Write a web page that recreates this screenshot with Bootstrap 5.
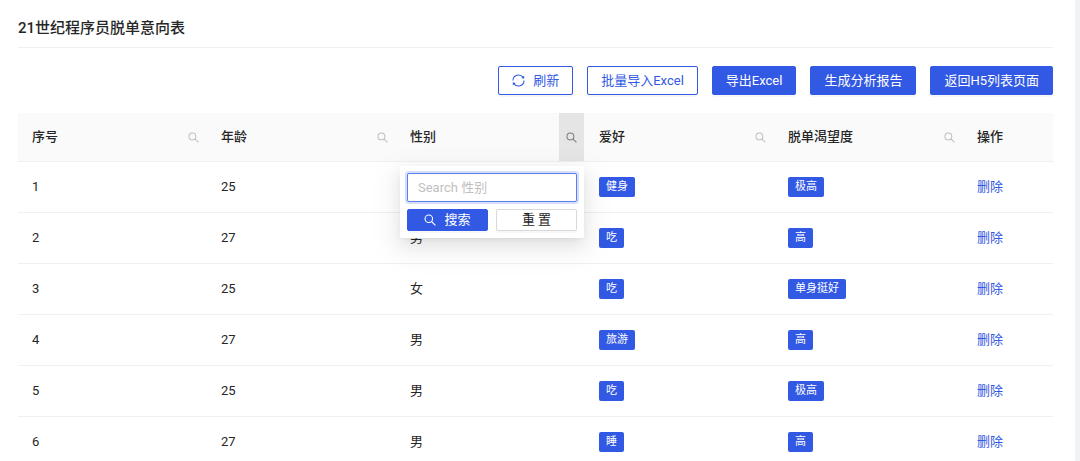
<!DOCTYPE html>
<html lang="zh-CN">
<head>
<meta charset="utf-8">
<meta name="viewport" content="width=device-width, initial-scale=1">
<title>21世纪程序员脱单意向表</title>
<link href="https://cdn.jsdelivr.net/npm/bootstrap@5.3.0/dist/css/bootstrap.min.css" rel="stylesheet">
<style>
  :root { --brand: #3259e3; --ink: #262626; --line: #f0f0f0; }
  body { font-family: Roboto, "Noto Sans CJK SC", sans-serif; font-size: 13px; line-height: 20px; color: var(--ink); background: #f0f2f5; }
  .page-panel { margin-right: 5px; padding: 10px 22px 0 18px; }
  .page-title { font-size: 15px; line-height: 37px; font-weight: 500; border-bottom: 1px solid var(--line); }
  .toolbar { gap: 14px; padding: 18px 0; }
  .btn { --bs-btn-font-size: 13px; --bs-btn-line-height: 19px; --bs-btn-padding-x: 13px; --bs-btn-padding-y: 4px; --bs-btn-border-radius: 2px; box-shadow: 0 2px 0 rgba(0,0,0,.03); }
  .btn-primary { --bs-btn-bg: var(--brand); --bs-btn-border-color: var(--brand); --bs-btn-hover-bg: #5c7ff0; }
  .btn-outline-primary { --bs-btn-color: var(--brand); --bs-btn-border-color: var(--brand); --bs-btn-bg: #fff; --bs-btn-hover-bg: var(--brand); }
  .data-table { table-layout: fixed; border-collapse: separate; border-spacing: 0; --bs-table-color: var(--ink); --bs-table-bg: transparent; border-color: var(--line); }
  .data-table > thead th { padding: 0; font-weight: 500; background: #fafafa; }
  .head-cell { height: 48px; padding-left: 14px; }
  .data-table > tbody td { height: 51px; padding: 0 14px; vertical-align: middle; }
  .col-action { width: 90px; }
  .filter-btn { width: 25px; border: 0; background: none; color: #bfbfbf; margin-right: 1px; }
  .filter-btn.active { background: #e5e5e5; color: #7d7d7d; }
  .filter-menu { top: 100%; right: 1px; width: 184px; margin-top: 5px; padding: 7px; z-index: 5; background: #fff; border-radius: 2px; box-shadow: 0 3px 6px -4px rgba(0,0,0,.12), 0 6px 16px rgba(0,0,0,.08), 0 9px 28px 8px rgba(0,0,0,.05); }
  .filter-menu .form-control { height: 29px; margin-bottom: 7px; padding: 0 10px; font-size: 13px; border-radius: 2px; border-color: #5c7ff0; box-shadow: 0 0 0 2px rgba(50,89,227,.2); }
  .form-control::placeholder { color: #bfbfbf; }
  .filter-menu .btn { --bs-btn-padding-y: 1px; --bs-btn-padding-x: 0; --bs-btn-line-height: 18px; flex: 1 1 0; }
  .btn-reset { --bs-btn-bg: #fff; --bs-btn-border-color: #d9d9d9; --bs-btn-color: var(--ink); }
  .tag { display: inline-block; padding: 0 7px; font-size: 11px; line-height: 20px; color: #fff; background: var(--brand); border-radius: 2px; vertical-align: middle; }
  .row-link { color: var(--brand); text-decoration: none; }
</style>
</head>
<body>
<svg class="d-none" xmlns="http://www.w3.org/2000/svg">
  <symbol id="search" viewBox="0 0 16 16"><g fill="none" stroke="currentColor" stroke-width="1.5"><circle cx="6.4" cy="6.4" r="5"/><path d="M10 10 15.2 15.2"/></g></symbol>
  <symbol id="sync" viewBox="0 0 16 16"><g fill="none" stroke="currentColor" stroke-width="1.3"><path d="M1.2 8A6.8 6.8 0 0 1 13.6 4.2M14.8 8A6.8 6.8 0 0 1 2.4 11.8"/></g><path fill="currentColor" d="M15 2.2v3.7l-3.5-.9zM1 13.8v-3.7l3.5.9z"/></symbol>
</svg>
<main class="page-panel bg-white min-vh-100">
  <h1 class="page-title mb-0">21世纪程序员脱单意向表</h1>
  <div class="toolbar d-flex flex-wrap justify-content-end">
    <button type="button" class="btn btn-outline-primary d-flex align-items-center gap-2"><svg width="13" height="13" aria-hidden="true"><use href="#sync"/></svg>刷新</button>
    <button type="button" class="btn btn-outline-primary">批量导入Excel</button>
    <button type="button" class="btn btn-primary">导出Excel</button>
    <button type="button" class="btn btn-primary">生成分析报告</button>
    <button type="button" class="btn btn-primary">返回H5列表页面</button>
  </div>
  <table class="table data-table mb-0">
    <thead>
      <tr>
        <th scope="col"><div class="head-cell d-flex align-items-center justify-content-between">序号<button type="button" class="filter-btn align-self-stretch p-0" aria-label="筛选序号"><svg width="11" height="11"><use href="#search"/></svg></button></div></th>
        <th scope="col"><div class="head-cell d-flex align-items-center justify-content-between">年龄<button type="button" class="filter-btn align-self-stretch p-0" aria-label="筛选年龄"><svg width="11" height="11"><use href="#search"/></svg></button></div></th>
        <th scope="col" class="position-relative"><div class="head-cell d-flex align-items-center justify-content-between">性别<button type="button" class="filter-btn active align-self-stretch p-0" aria-label="筛选性别"><svg width="11" height="11"><use href="#search"/></svg></button></div>
          <div class="filter-menu position-absolute fw-normal">
            <input type="text" class="form-control" placeholder="Search 性别" aria-label="Search 性别">
            <div class="d-flex gap-2">
              <button type="button" class="btn btn-primary d-flex align-items-center justify-content-center gap-2"><svg width="12" height="12" aria-hidden="true"><use href="#search"/></svg>搜索</button>
              <button type="button" class="btn btn-reset">重 置</button>
            </div>
          </div>
        </th>
        <th scope="col"><div class="head-cell d-flex align-items-center justify-content-between">爱好<button type="button" class="filter-btn align-self-stretch p-0" aria-label="筛选爱好"><svg width="11" height="11"><use href="#search"/></svg></button></div></th>
        <th scope="col"><div class="head-cell d-flex align-items-center justify-content-between">脱单渴望度<button type="button" class="filter-btn align-self-stretch p-0" aria-label="筛选脱单渴望度"><svg width="11" height="11"><use href="#search"/></svg></button></div></th>
        <th scope="col" class="col-action"><div class="head-cell d-flex align-items-center">操作</div></th>
      </tr>
    </thead>
    <tbody>
      <tr><td>1</td><td>25</td><td>男</td><td><span class="tag">健身</span></td><td><span class="tag">极高</span></td><td><a class="row-link" href="#">删除</a></td></tr>
      <tr><td>2</td><td>27</td><td>男</td><td><span class="tag">吃</span></td><td><span class="tag">高</span></td><td><a class="row-link" href="#">删除</a></td></tr>
      <tr><td>3</td><td>25</td><td>女</td><td><span class="tag">吃</span></td><td><span class="tag">单身挺好</span></td><td><a class="row-link" href="#">删除</a></td></tr>
      <tr><td>4</td><td>27</td><td>男</td><td><span class="tag">旅游</span></td><td><span class="tag">高</span></td><td><a class="row-link" href="#">删除</a></td></tr>
      <tr><td>5</td><td>25</td><td>男</td><td><span class="tag">吃</span></td><td><span class="tag">极高</span></td><td><a class="row-link" href="#">删除</a></td></tr>
      <tr><td>6</td><td>27</td><td>男</td><td><span class="tag">睡</span></td><td><span class="tag">高</span></td><td><a class="row-link" href="#">删除</a></td></tr>
    </tbody>
  </table>
</main>
<script src="https://cdn.jsdelivr.net/npm/bootstrap@5.3.0/dist/js/bootstrap.bundle.min.js"></script>
</body>
</html>
